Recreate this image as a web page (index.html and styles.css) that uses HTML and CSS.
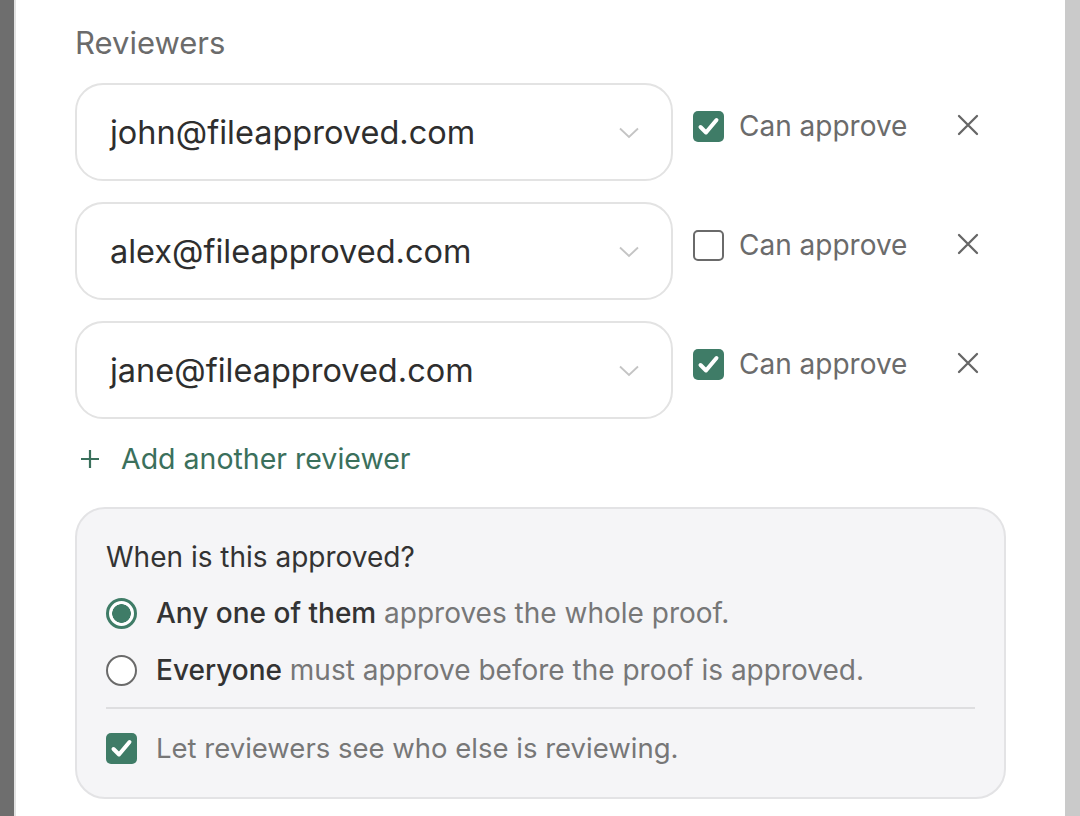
FILE: index.html
```html
<!DOCTYPE html>
<html>
<head>
<meta charset="utf-8">
<link rel="stylesheet" href="styles.css">
</head>
<body>
<div class="edge-left"></div>
<main class="main">
  <div class="section-label">Reviewers</div>
  <div class="rows">
    <div class="row">
      <div class="select"><span>john@fileapproved.com</span>
        <svg class="chev" viewBox="0 0 20 12" width="20" height="12"><path d="M1 1.5 L10 10 L19 1.5" fill="none" stroke="#c4c4c4" stroke-width="1.8"/></svg>
      </div>
      <label class="perm"><span class="cb on"><svg viewBox="0 0 31 31" width="31" height="31"><path d="M7.5 16 L13 21.5 L23.5 9" fill="none" stroke="#fff" stroke-width="4" stroke-linecap="round" stroke-linejoin="round"/></svg></span><span class="perm-text">Can approve</span></label>
      <svg class="close" viewBox="0 0 22 22" width="22" height="22"><path d="M2 2 L20 20 M20 2 L2 20" stroke="#666" stroke-width="2.3" stroke-linecap="round"/></svg>
    </div>
    <div class="row">
      <div class="select"><span>alex@fileapproved.com</span>
        <svg class="chev" viewBox="0 0 20 12" width="20" height="12"><path d="M1 1.5 L10 10 L19 1.5" fill="none" stroke="#c4c4c4" stroke-width="1.8"/></svg>
      </div>
      <label class="perm"><span class="cb"></span><span class="perm-text">Can approve</span></label>
      <svg class="close" viewBox="0 0 22 22" width="22" height="22"><path d="M2 2 L20 20 M20 2 L2 20" stroke="#666" stroke-width="2.3" stroke-linecap="round"/></svg>
    </div>
    <div class="row">
      <div class="select"><span>jane@fileapproved.com</span>
        <svg class="chev" viewBox="0 0 20 12" width="20" height="12"><path d="M1 1.5 L10 10 L19 1.5" fill="none" stroke="#c4c4c4" stroke-width="1.8"/></svg>
      </div>
      <label class="perm"><span class="cb on"><svg viewBox="0 0 31 31" width="31" height="31"><path d="M7.5 16 L13 21.5 L23.5 9" fill="none" stroke="#fff" stroke-width="4" stroke-linecap="round" stroke-linejoin="round"/></svg></span><span class="perm-text">Can approve</span></label>
      <svg class="close" viewBox="0 0 22 22" width="22" height="22"><path d="M2 2 L20 20 M20 2 L2 20" stroke="#666" stroke-width="2.3" stroke-linecap="round"/></svg>
    </div>
  </div>
  <div class="add"><svg viewBox="0 0 20 20" width="20" height="20"><path d="M10 1 V19 M1 10 H19" stroke="#3b705c" stroke-width="2.2"/></svg><span>Add another reviewer</span></div>
  <div class="panel">
    <div class="panel-title">When is this approved?</div>
    <div class="opt"><span class="radio on"></span><span><b>Any one of them</b> approves the whole proof.</span></div>
    <div class="opt"><span class="radio"></span><span><b>Everyone</b> must approve before the proof is approved.</span></div>
    <div class="divider"></div>
    <div class="opt small"><span class="cb on"><svg viewBox="0 0 31 31" width="31" height="31"><path d="M7.5 16 L13 21.5 L23.5 9" fill="none" stroke="#fff" stroke-width="4" stroke-linecap="round" stroke-linejoin="round"/></svg></span><span>Let reviewers see who else is reviewing.</span></div>
  </div>
</main>
<div class="edge-right"></div>
</body>
</html>
```
FILE: styles.css
```css
html, body { margin: 0; padding: 0; }
body {
  display: flex;
  width: 1080px;
  height: 816px;
  overflow: hidden;
  background: #fff;
  font-family: Inter, "Noto Sans", sans-serif;
  color: #333;
}
.edge-left {
  width: 14px;
  background: #6e6e6e;
  border-right: 2px solid #e2e2e2;
  flex: none;
}
.edge-right {
  width: 15px;
  background: #cacaca;
  flex: none;
}
.main {
  flex: 1;
  padding: 24px 0 0 59px;
}
.section-label {
  font-size: 31px;
  line-height: 38px;
  color: #6b6b6b;
  margin-bottom: 21px;
}
.rows { display: flex; flex-direction: column; gap: 21px; }
.row { display: flex; align-items: flex-start; }
.select {
  width: 598px;
  height: 98px;
  box-sizing: border-box;
  border: 2px solid #e3e3e3;
  border-radius: 28px;
  display: flex;
  align-items: center;
  justify-content: space-between;
  padding: 0 32px 0 33px;
  font-size: 32.5px;
  color: #2e2e2e;
}
.chev { margin-top: 2px; }
.perm {
  display: flex;
  align-items: center;
  margin-left: 20px;
  margin-top: 26px;
}
.cb {
  width: 31px; height: 31px;
  box-sizing: border-box;
  border: 2px solid #6a6a6a;
  border-radius: 5px;
  background: #fff;
  display: flex; align-items: center; justify-content: center;
  flex: none;
  overflow: hidden;
}
.cb.on { background: #3f7c67; border: none; }
.perm-text {
  font-size: 28px;
  color: #6b6b6b;
  margin-left: 15px;
}
.close { margin-left: 50px; margin-top: 31px; }
.add {
  display: flex;
  align-items: center;
  margin: 22px 0 0 5px;
  color: #3b705c;
  font-size: 28.5px;
  line-height: 36px;
}
.add span { margin-left: 21px; }
.panel {
  margin-top: 30px;
  width: 931px;
  box-sizing: border-box;
  background: #f5f5f7;
  border: 2px solid #e3e3e5;
  border-radius: 30px;
  padding: 30px 29px 31px 29px;
}
.panel-title {
  font-size: 28px;
  line-height: 36px;
  color: #333;
  font-weight: 400;
  margin-bottom: 20px;
}
.opt {
  display: flex;
  align-items: center;
  font-size: 28px;
  line-height: 36px;
  color: #777;
  margin-bottom: 21px;
}
.opt.small { font-size: 27.5px; }
.opt > span:last-child { margin-left: 19px; }
.opt b { font-weight: 500; color: #333; }
.radio {
  width: 31px; height: 31px;
  box-sizing: border-box;
  border-radius: 50%;
  border: 2px solid #6a6a6a;
  background: #fff;
  flex: none;
}
.radio.on {
  border: 3px solid #3f7c67;
  background: radial-gradient(circle, #3f7c67 0 9px, #fff 9.6px);
}
.divider {
  height: 2px;
  background: #dedee0;
  margin: -2px 0 21px 0;
}
.panel .opt:last-child { margin-bottom: 0; }
```
